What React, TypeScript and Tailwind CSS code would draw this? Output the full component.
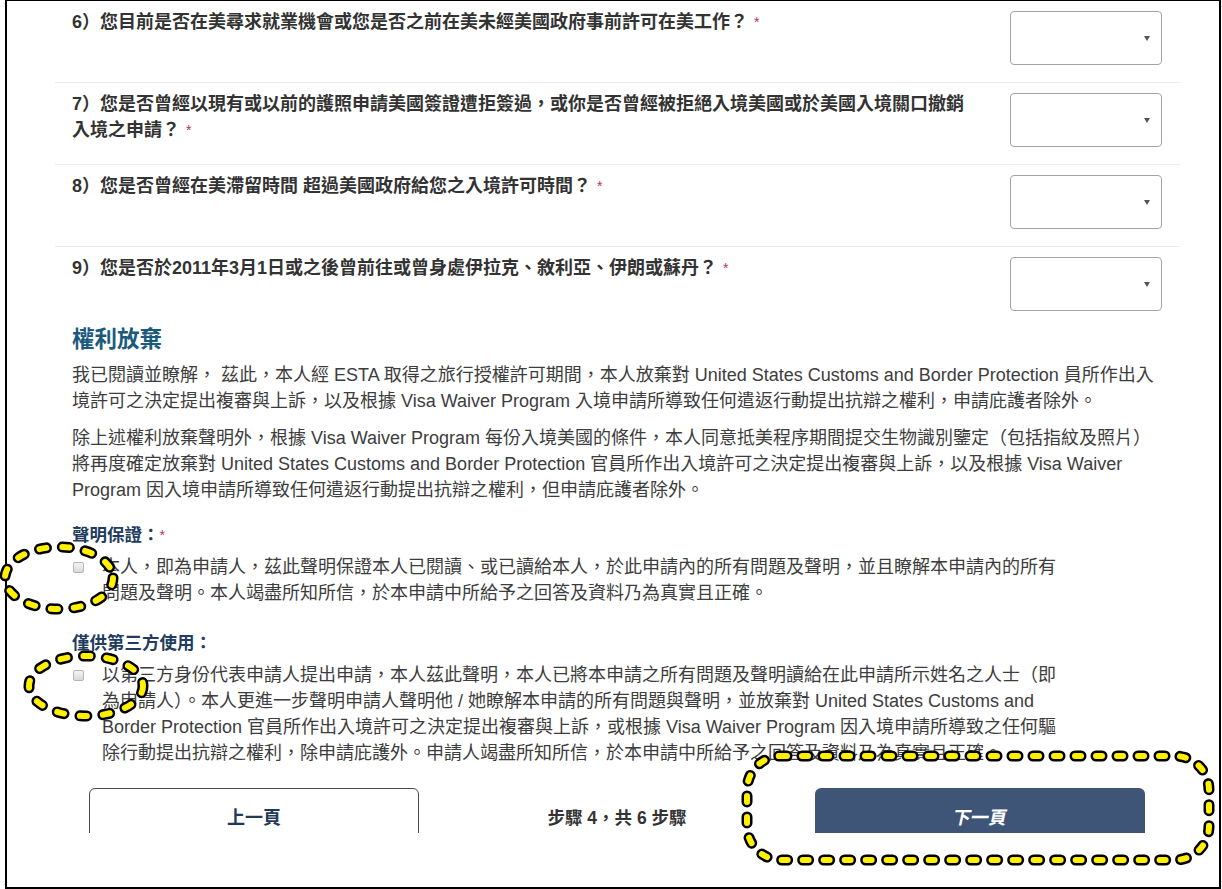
import React from "react";

function Star() {
  return <span className="ml-[6px] text-[14px] font-normal text-[#b3364a] align-top">*</span>;
}

function SelectBox() {
  return (
    <div className="mt-[2px] flex h-[54px] w-[152px] shrink-0 items-center justify-end rounded-[4px] border border-[#a4a4a4] bg-white pr-[11px]">
      <svg width="6" height="5" viewBox="0 0 6 5">
        <path d="M0 0 L6 0 L3 5 Z" fill="#555" />
      </svg>
    </div>
  );
}

function Question({ children, last }: { children: React.ReactNode; last?: boolean }) {
  return (
    <div
      className={
        last
          ? "flex justify-between pl-[17px] pr-[18px] pt-[8px] pb-[15px]"
          : "flex justify-between border-b border-[#ebebeb] pl-[17px] pr-[18px] pt-[8px] pb-[17px]"
      }
    >
      <div className="text-[18px] font-bold leading-[26px] text-[#333333]">{children}</div>
      <SelectBox />
    </div>
  );
}

function CheckBox() {
  return (
    <div className="w-[30px] shrink-0 pl-[1px] pt-[8px]">
      <div className="h-[11px] w-[11px] rounded-[2px] border border-[#b5b5b5] bg-gradient-to-b from-[#f4f4f4] to-[#d9d9d9]" />
    </div>
  );
}

function Annotations() {
  return (
    <svg className="pointer-events-none absolute left-0 top-0" width="1222" height="889" viewBox="0 0 1222 889">
      <g fill="none" strokeLinecap="round">
        <ellipse cx="59" cy="578" rx="54" ry="31" stroke="#000" strokeWidth="11" strokeDasharray="7 16" />
        <ellipse cx="59" cy="578" rx="54" ry="31" stroke="#fff000" strokeWidth="6" strokeDasharray="7 16" />
        <ellipse cx="86" cy="686" rx="57" ry="30" stroke="#000" strokeWidth="11" strokeDasharray="7 16" />
        <ellipse cx="86" cy="686" rx="57" ry="30" stroke="#fff000" strokeWidth="6" strokeDasharray="7 16" />
        <rect x="747" y="756" width="462" height="104" rx="34" stroke="#000" strokeWidth="11" strokeDasharray="6 15" />
        <rect x="747" y="756" width="462" height="104" rx="34" stroke="#fff000" strokeWidth="6" strokeDasharray="6 15" />
      </g>
    </svg>
  );
}

export default function App() {
  return (
    <div
      lang="zh-Hant"
      className="relative h-[889px] w-[1222px] overflow-hidden bg-white font-['Liberation_Sans','Noto_Sans_CJK_TC',sans-serif]"
    >
      <div className="ml-[5px] h-[889px] w-[1216px] border-x-2 border-b-2 border-t border-black">
        <div className="h-[832px] overflow-hidden">
          <div className="ml-[48px] w-[1125px]">
            <Question>
              6）您目前是否在美尋求就業機會或您是否之前在美未經美國政府事前許可在美工作？
              <Star />
            </Question>
            <Question>
              7）您是否曾經以現有或以前的護照申請美國簽證遭拒簽過，或你是否曾經被拒絕入境美國或於美國入境關口撤銷
              <br />
              入境之申請？
              <Star />
            </Question>
            <Question>
              8）您是否曾經在美滯留時間 超過美國政府給您之入境許可時間？
              <Star />
            </Question>
            <Question last>
              9）您是否於2011年3月1日或之後曾前往或曾身處伊拉克、敘利亞、伊朗或蘇丹？
              <Star />
            </Question>
          </div>

          <div className="ml-[65px] w-[1107px]">
            <h2 className="text-[22.5px] font-bold leading-[28px] text-[#1b5a7d]">權利放棄</h2>
            <p className="mt-[8px] whitespace-nowrap text-[18px] leading-[26px] text-[#3d3d3d]">
              我已閱讀並瞭解， 茲此，本人經 ESTA 取得之旅行授權許可期間，本人放棄對 United States Customs and Border Protection 員所作出入
              <br />
              境許可之決定提出複審與上訴，以及根據 Visa Waiver Program 入境申請所導致任何遣返行動提出抗辯之權利，申請庇護者除外。
            </p>
            <p className="mt-[11px] whitespace-nowrap text-[18px] leading-[26px] text-[#3d3d3d]">
              除上述權利放棄聲明外，根據 Visa Waiver Program 每份入境美國的條件，本人同意抵美程序期間提交生物識別鑒定（包括指紋及照片）
              <br />
              將再度確定放棄對 United States Customs and Border Protection 官員所作出入境許可之決定提出複審與上訴，以及根據 Visa Waiver
              <br />
              Program 因入境申請所導致任何遣返行動提出抗辯之權利，但申請庇護者除外。
            </p>

            <div className="mt-[19px] text-[17.5px] font-bold leading-[26px] text-[#213c5e]">
              聲明保證：
              <span className="text-[14px] font-normal text-[#b3364a] align-top">*</span>
            </div>
            <div className="mt-[6px] flex">
              <CheckBox />
              <div className="whitespace-nowrap text-[18px] leading-[26px] text-[#3d3d3d]">
                本人，即為申請人，茲此聲明保證本人已閱讀、或已讀給本人，於此申請內的所有問題及聲明，並且瞭解本申請內的所有
                <br />
                問題及聲明。本人竭盡所知所信，於本申請中所給予之回答及資料乃為真實且正確。
              </div>
            </div>

            <div className="mt-[24px] text-[17.5px] font-bold leading-[26px] text-[#213c5e]">僅供第三方使用：</div>
            <div className="mt-[6px] flex">
              <CheckBox />
              <div className="whitespace-nowrap text-[18px] leading-[26px] text-[#3d3d3d]">
                以第三方身份代表申請人提出申請，本人茲此聲明，本人已將本申請之所有問題及聲明讀給在此申請所示姓名之人士（即
                <br />
                為申請人）。本人更進一步聲明申請人聲明他 / 她瞭解本申請的所有問題與聲明，並放棄對 United States Customs and
                <br />
                Border Protection 官員所作出入境許可之決定提出複審與上訴，或根據 Visa Waiver Program 因入境申請所導致之任何驅
                <br />
                除行動提出抗辯之權利，除申請庇護外。申請人竭盡所知所信，於本申請中所給予之回答及資料乃為真實且正確。
              </div>
            </div>

            <div className="mt-[22px] flex w-[1090px] items-center justify-between px-[17px]">
              <div className="flex h-[60px] w-[330px] items-center justify-center rounded-[6px] border-[1.5px] border-[#4a4a4a] text-[18px] font-bold text-[#1f3a5c]">
                上一頁
              </div>
              <div className="text-[17.5px] font-bold text-[#333333]">步驟 4，共 6 步驟</div>
              <div className="flex h-[60px] w-[330px] items-center justify-center rounded-[6px] bg-[#3e5577] text-[18px] font-bold text-white">
                <span className="inline-block -skew-x-12">下一頁</span>
              </div>
            </div>
          </div>
        </div>
      </div>
      <Annotations />
    </div>
  );
}
